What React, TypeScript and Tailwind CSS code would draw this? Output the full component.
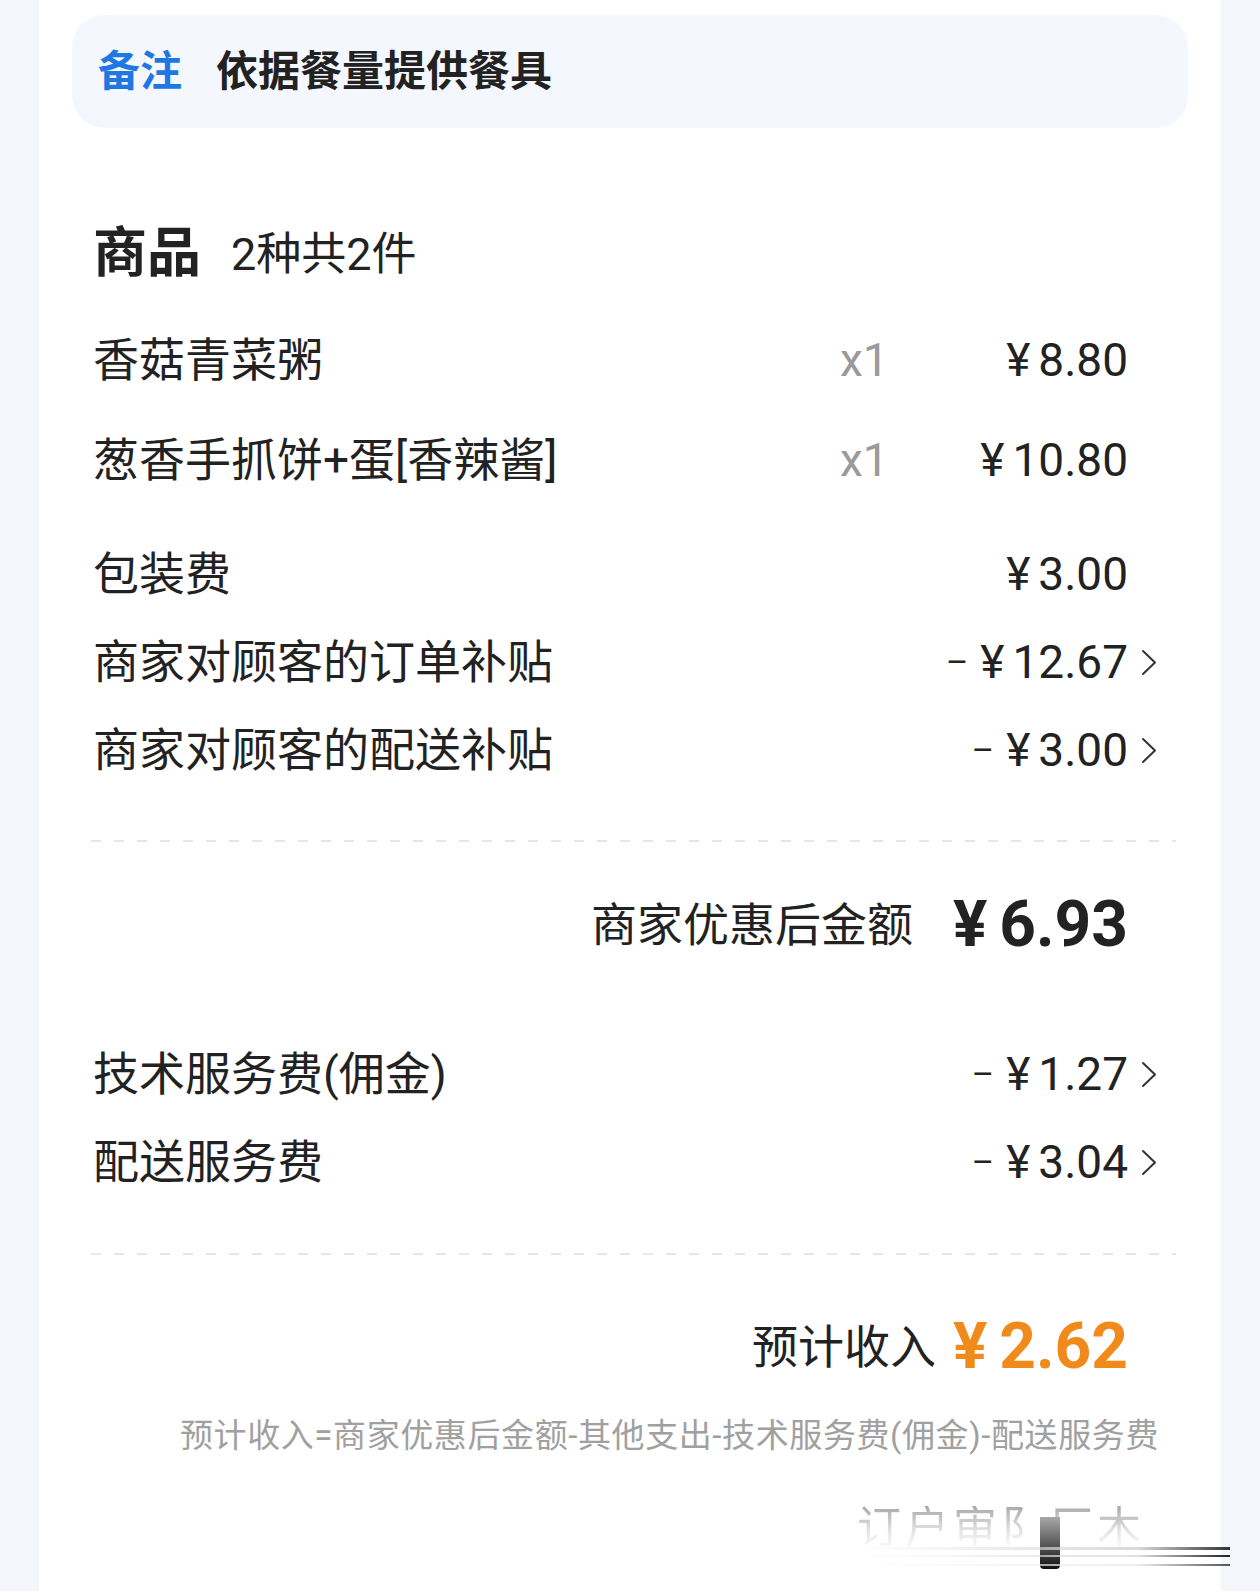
import { ReactNode } from "react";

const Chevron = () => (
    <svg width="16" height="27" viewBox="0 0 16 27" fill="none">
        <polyline points="2,2 14,13.5 2,25" stroke="#333" strokeWidth="2" strokeLinecap="round" strokeLinejoin="round" />
    </svg>
);

const Price = ({ value, minus }: { value: string; minus?: boolean }) => (
    <span className="flex items-center whitespace-nowrap">
        {minus && <span className="mr-[12px] text-[34px]">–</span>}
        <span className="mr-[8px]">¥</span>
        <span>{value}</span>
    </span>
);

const FeeRow = ({ label, children, arrow }: { label: string; children: ReactNode; arrow?: boolean }) => (
    <div className="h-[88px] flex items-center pl-[21px] pr-[31px] text-[46px] leading-none text-[#222]">
        <span className="flex-1">{label}</span>
        {children}
        <span className="w-[29px] flex justify-end">{arrow && <Chevron />}</span>
    </div>
);

const ItemRow = ({ name, price }: { name: string; price: string }) => (
    <div className="h-[100px] flex items-center pl-[21px] pr-[31px] text-[46px] leading-none text-[#222]">
        <span className="flex-1">{name}</span>
        <span className="w-[50px] text-[#9a9a9a]">x1</span>
        <span className="w-[238px] flex justify-end">
            <Price value={price} />
        </span>
        <span className="w-[29px]" />
    </div>
);

const Dashed = () => (
    <div className="ml-[19px] mr-[12px] h-[2px] bg-[linear-gradient(to_right,#e6e6e6_45%,transparent_45%)] bg-[length:23px_2px]" />
);

export default function App() {
    return (
        <div className="w-full h-[1591px] overflow-hidden bg-[#f4f6fb] px-[39px] font-['Roboto','Noto_Sans_CJK_SC',sans-serif]">
            <div className="w-[1182px] h-full bg-white px-[33px] pt-[15px]">
                {/* Remark */}
                <div className="h-[113px] rounded-[32px] bg-[#f4f7fd] flex items-center pl-[26px] text-[42px] font-bold leading-none">
                    <span className="text-[#1f78e2]">备注</span>
                    <span className="ml-[34px] text-[#222]">依据餐量提供餐具</span>
                </div>

                {/* Goods */}
                <div className="mt-[76px] h-[100px] mb-[6px] flex items-center pl-[21px] leading-none text-[#222]">
                    <span className="text-[54px] font-bold">商品</span>
                    <span className="ml-[30px] text-[45px]">2种共2件</span>
                </div>
                <ItemRow name="香菇青菜粥" price="8.80" />
                <ItemRow name="葱香手抓饼+蛋[香辣酱]" price="10.80" />

                <div className="mt-[20px]">
                    <FeeRow label="包装费">
                        <Price value="3.00" />
                    </FeeRow>
                    <FeeRow label="商家对顾客的订单补贴" arrow>
                        <Price value="12.67" minus />
                    </FeeRow>
                    <FeeRow label="商家对顾客的配送补贴" arrow>
                        <Price value="3.00" minus />
                    </FeeRow>
                </div>

                <div className="mt-[46px]">
                    <Dashed />
                </div>

                <div className="h-[166px] flex items-center justify-end pr-[60px] leading-none text-[#222]">
                    <span className="text-[46px] mr-[40px]">商家优惠后金额</span>
                    <span className="text-[64px] font-bold flex items-center">
                        <span className="mr-[12px]">¥</span>6.93
                    </span>
                </div>

                <div className="mt-[22px]">
                    <FeeRow label="技术服务费(佣金)" arrow>
                        <Price value="1.27" minus />
                    </FeeRow>
                    <FeeRow label="配送服务费" arrow>
                        <Price value="3.04" minus />
                    </FeeRow>
                </div>

                <div className="mt-[47px]">
                    <Dashed />
                </div>

                <div className="mt-[42px] h-[100px] flex items-center justify-end pr-[60px] leading-none">
                    <span className="text-[46px] text-[#222] mr-[17px]">预计收入</span>
                    <span className="text-[64px] font-bold text-[#f08a1b] flex items-center">
                        <span className="mr-[12px]">¥</span>2.62
                    </span>
                </div>

                <div className="mt-[11px] h-[54px] flex items-center justify-end pr-[29px] text-[33px] tracking-[0.6px] leading-none text-[#a0a0a0] whitespace-nowrap">
                    预计收入=商家优惠后金额-其他支出-技术服务费(佣金)-配送服务费
                </div>

                {/* watermark */}
                <div className="mt-[44px] flex justify-end">
                    <div className="relative w-[360px] h-[62px]">
                        <span className="absolute left-[29px] top-0 whitespace-nowrap text-[44px] leading-none tracking-[4px] text-transparent bg-clip-text bg-[linear-gradient(to_bottom,#a8a8a8_0%,#e2e2e2_55%,transparent_100%)]">
                            订户审阝厂木
                        </span>
                        <span className="absolute left-[212px] top-[11px] w-[20px] h-[52px] rounded-b bg-[linear-gradient(to_bottom,#a8a8a8,#111)]" />
                        <span className="absolute left-[32px] top-[41px] w-[370px] h-[3px] bg-[linear-gradient(to_right,transparent,#dadada_75%,#333)]" />
                        <span className="absolute left-[32px] top-[49px] w-[370px] h-[2px] bg-[linear-gradient(to_right,transparent,#e0e0e0_75%,#222)]" />
                        <span className="absolute left-[32px] top-[58px] w-[370px] h-[2px] bg-[linear-gradient(to_right,transparent,#eeeeee_75%,#555)]" />
                    </div>
                </div>
            </div>
        </div>
    );
}
